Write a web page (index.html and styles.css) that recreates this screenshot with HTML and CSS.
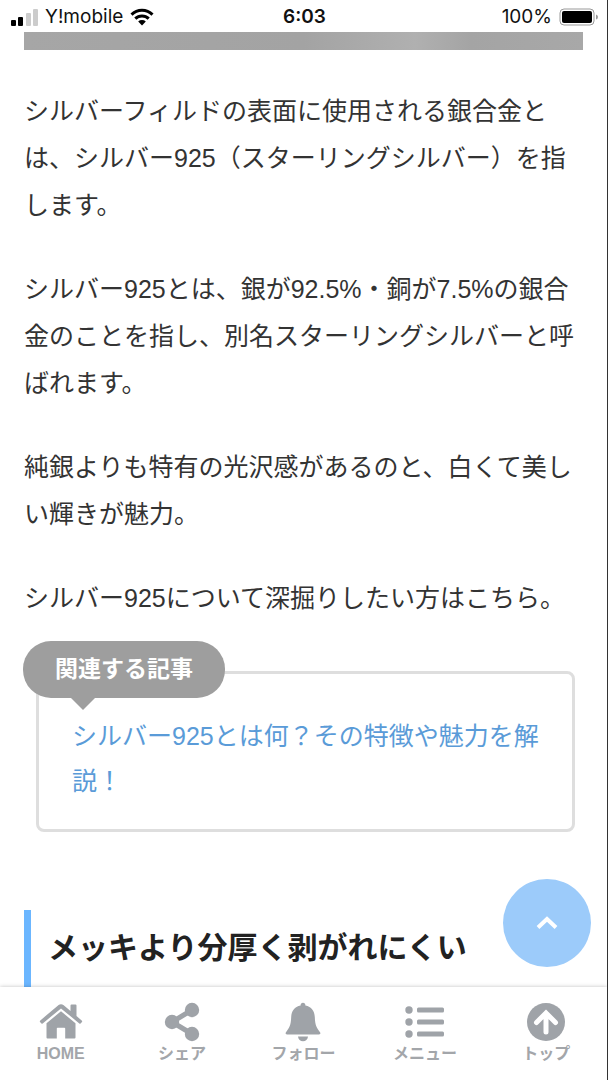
FILE: index.html
```html
<!DOCTYPE html>
<html lang="ja">
<head>
    <meta charset="UTF-8">
    <meta name="viewport" content="width=device-width, initial-scale=1.0">
    <title>シルバーフィルドとは</title>
    <link rel="stylesheet" href="styles.css">
</head>
<body>
    <div class="screen">
        <header class="status-bar">
            <div class="status-left">
                <svg class="signal" viewBox="0 0 27 17">
                    <rect x="0" y="11" width="5" height="6" rx="1"/>
                    <rect x="7" y="8" width="5" height="9" rx="1"/>
                    <rect class="weak" x="15" y="4" width="5" height="13" rx="1"/>
                    <rect class="weak" x="22" y="0" width="5" height="17" rx="1"/>
                </svg>
                <span>Y!mobile</span>
                <svg class="wifi" viewBox="0 0 24 18">
                    <path d="M1.5 6.6a15 15 0 0 1 21 0M5.3 10.6a9.6 9.6 0 0 1 13.4 0"/>
                    <path class="dot" d="M8.2 13.6a5.6 5.6 0 0 1 7.6 0L12 17.6z"/>
                </svg>
            </div>
            <time class="clock">6:03</time>
            <div class="status-right">
                <span>100%</span>
                <svg class="battery" viewBox="0 0 39 18">
                    <rect class="shell" x="1" y="1" width="34" height="16" rx="4"/>
                    <rect x="3" y="3" width="30" height="12" rx="2"/>
                    <path class="cap" d="M37 6.500q2 .5 2 2.500t-2 2.500z"/>
                </svg>
            </div>
        </header>

        <main class="content">
            <div class="photo"></div>

            <article class="entry">
                <p>シルバーフィルドの表面に使用される銀合金とは、シルバー925（スターリングシルバー）を指します。</p>
                <p>シルバー925とは、銀が92.5%・銅が7.5%の銀合金のことを指し、別名スターリングシルバーと呼ばれます。</p>
                <p>純銀よりも特有の光沢感があるのと、白くて美しい輝きが魅力。</p>
                <p>シルバー925について深掘りしたい方はこちら。</p>

                <div class="related">
                    <span class="related-label">関連する記事</span>
                    <a href="#">シルバー925とは何？その特徴や魅力を解説！</a>
                </div>

                <h3>メッキより分厚く剥がれにくい</h3>
            </article>
        </main>

        <button class="page-top" type="button" aria-label="ページの先頭へ">
            <svg viewBox="0 0 22 14"><path d="M2 11.500l9-8.500 9 8.500"/></svg>
        </button>

        <nav class="footer-menu">
            <a href="#">
                <svg viewBox="0 0 44 40">
                    <path d="M22 2.200q-1.400 0-2.400.9L1.300 18.400q-.9.800-.2 1.700l1 1.200q.7.900 1.600.1L22 6.400l18.300 15q.9.800 1.600-.1l1-1.200q.7-.9-.2-1.700L37.500 14V3.400q0-1-1-1h-4q-1 0-1 1V9l-7.100-5.900q-1-.9-2.400-.9z"/>
                    <path d="M22 9.300L7.500 21.300V35.500q0 1 1 1h9.300V26.500q0-.8.800-.8h6.800q.8 0 .8.800v10h9.300q1 0 1-1V21.300z"/>
                </svg>
                <span>HOME</span>
            </a>
            <a href="#">
                <svg viewBox="0 0 44 40">
                    <path class="line" d="M32 8L12 20l20 12"/>
                    <circle cx="32" cy="8" r="7.200"/>
                    <circle cx="12" cy="20" r="7.200"/>
                    <circle cx="32" cy="32" r="7.200"/>
                </svg>
                <span>シェア</span>
            </a>
            <a href="#">
                <svg viewBox="0 0 44 40">
                    <path d="M22 .8c-1.500 0-2.400 1-2.400 2.700C13.500 4.500 10.500 9 10.200 15c-.3 8-1.800 10.800-5.200 15.200-.8 1.200-.3 2.300 1 2.300h32c1.300 0 1.800-1.100 1-2.300-3.400-4.400-4.900-7.200-5.200-15.200-.3-6-3.300-10.500-9.400-11.500C24.400 1.800 23.500.8 22 .8z"/>
                    <path d="M17 34.500h10c-.3 3-2.300 4.800-5 4.800s-4.700-1.800-5-4.800z"/>
                </svg>
                <span>フォロー</span>
            </a>
            <a href="#">
                <svg viewBox="0 0 44 40">
                    <circle cx="6" cy="8" r="3.700"/>
                    <circle cx="6" cy="20" r="3.700"/>
                    <circle cx="6" cy="32" r="3.700"/>
                    <rect x="14" y="5.500" width="27" height="5" rx="1.500"/>
                    <rect x="14" y="17.500" width="27" height="5" rx="1.500"/>
                    <rect x="14" y="29.500" width="27" height="5" rx="1.500"/>
                </svg>
                <span>メニュー</span>
            </a>
            <a href="#">
                <svg viewBox="0 0 44 40">
                    <circle cx="22" cy="20" r="19"/>
                    <path class="arrow" d="M22 30V11M12.500 20.500L22 11l9.500 9.500"/>
                </svg>
                <span>トップ</span>
            </a>
        </nav>
    </div>
</body>
</html>
```
FILE: styles.css
```css
* {
    margin: 0;
    padding: 0;
    box-sizing: border-box;
}

body {
    font-family: "Liberation Sans", "Noto Sans CJK JP", sans-serif;
    color: #333;
    background-color: #fff;
}

.screen {
    position: relative;
    display: flex;
    flex-direction: column;
    height: 100vh;
    overflow: hidden;
    border-right: 1px solid #333;
}

/* status bar */
.status-bar {
    display: grid;
    grid-template-columns: 1fr auto 1fr;
    align-items: center;
    height: 32px;
    padding: 0 9px 0 11px;
    font-family: Inter, "Liberation Sans", sans-serif;
    font-size: 19px;
    line-height: 34px;
    color: #111;
}

.status-left,
.status-right {
    display: flex;
    align-items: center;
    gap: 7px;
}

.status-right {
    justify-content: flex-end;
}

.clock {
    font-weight: 600;
}

.signal {
    width: 27px;
    height: 17px;
}

.signal .weak {
    fill: #ccc;
}

.wifi {
    width: 24px;
    height: 18px;
    fill: none;
    stroke: #000;
    stroke-width: 3;
}

.wifi .dot {
    fill: #000;
    stroke: none;
}

.battery {
    width: 39px;
    height: 18px;
}

.battery .shell {
    fill: none;
    stroke: #999;
    stroke-width: 1;
}

.battery .cap {
    fill: #999;
}

/* article */
.content {
    flex: 1;
    min-height: 0;
    overflow: hidden;
    padding: 0 24px;
}

.photo {
    height: 18px;
    margin-bottom: 38px;
    background: linear-gradient(90deg, #a6a6a6, #a3a3a3 50%, #b0b0b0 70%, #a4a4a4 80%, #a8a8a8);
}

.entry p {
    margin-bottom: 37px;
    font-size: 25px;
    line-height: 47px;
}

.related {
    position: relative;
    margin: 49px 8px 78px 12px;
    padding: 40px 24px 25px 33px;
    border: 3px solid #dedede;
    border-radius: 8px;
}

.related a {
    display: block;
    font-size: 25px;
    line-height: 45px;
    color: #5a9bd8;
    text-decoration: none;
}

.related-label {
    position: absolute;
    top: -33px;
    left: -16px;
    padding: 0 32px;
    border-radius: 28px;
    font-size: 23px;
    font-weight: bold;
    line-height: 57px;
    color: #fff;
    background-color: #9e9e9e;
}

.related-label::after {
    content: "";
    position: absolute;
    top: 100%;
    left: 48px;
    border: 12px solid transparent;
    border-top-color: #9e9e9e;
    border-bottom: 0;
}

.entry h3 {
    padding: 14px 0 16px 17px;
    border-left: 7px solid #6bb6ff;
    font-size: 30px;
    line-height: 47px;
    color: #222;
}

.page-top {
    position: absolute;
    right: 16px;
    bottom: 113px;
    display: flex;
    align-items: center;
    justify-content: center;
    width: 88px;
    height: 88px;
    border: none;
    border-radius: 50%;
    background-color: #9ccbfa;
    cursor: pointer;
}

.page-top svg {
    width: 22px;
    height: 14px;
    fill: none;
    stroke: #fff;
    stroke-width: 4;
}

/* footer menu */
.footer-menu {
    position: relative;
    display: grid;
    grid-template-columns: repeat(5, 1fr);
    height: 93px;
    padding-top: 15px;
    background-color: #fff;
    box-shadow: 0 0 4px rgba(0, 0, 0, 0.25);
}

.footer-menu a {
    display: flex;
    flex-direction: column;
    align-items: center;
    font-size: 16px;
    font-weight: bold;
    line-height: 24px;
    color: #a3a6aa;
    text-decoration: none;
}

.footer-menu svg {
    width: 44px;
    height: 40px;
    fill: #9fa3a8;
}

.footer-menu .line {
    fill: none;
    stroke: #9fa3a8;
    stroke-width: 5;
}

.footer-menu .arrow {
    fill: none;
    stroke: #fff;
    stroke-width: 5;
    stroke-linecap: round;
}
```
